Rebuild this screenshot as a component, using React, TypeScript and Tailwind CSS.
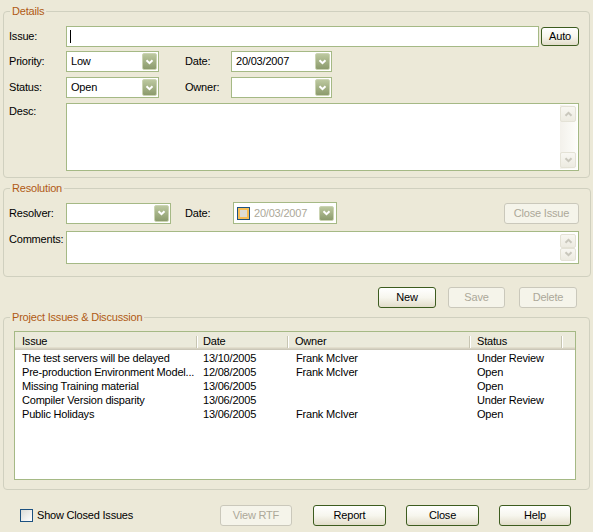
import type { ReactNode } from "react";

const ISSUES = [
  { issue: "The test servers will be delayed", date: "13/10/2005", owner: "Frank McIver", status: "Under Review" },
  { issue: "Pre-production Environment Model...", date: "12/08/2005", owner: "Frank McIver", status: "Open" },
  { issue: "Missing Training material", date: "13/06/2005", owner: "", status: "Open" },
  { issue: "Compiler Version disparity", date: "13/06/2005", owner: "", status: "Under Review" },
  { issue: "Public Holidays", date: "13/06/2005", owner: "Frank McIver", status: "Open" },
];

function DropArrow({ className = "h-full" }: { className?: string }) {
  return (
    <div
      className={`flex w-[15px] items-center justify-center rounded-[2px] border border-[#CBD4B3] bg-gradient-to-b from-[#BCC89F] to-[#8C9B6D] ${className}`}
    >
      <svg width="9" height="6" viewBox="0 0 9 6">
        <path d="M1.5 1.2 L4.5 4.2 L7.5 1.2" stroke="#fff" strokeWidth="2" fill="none" />
      </svg>
    </div>
  );
}

function Select({ width, value }: { width: string; value?: string }) {
  return (
    <div className={`flex h-[21px] border border-[#A5B985] bg-white p-px ${width}`}>
      <span className="flex-1 pl-[3px] leading-[17px]">{value}</span>
      <DropArrow />
    </div>
  );
}

function ScrollArrow({ up, className }: { up?: boolean; className: string }) {
  return (
    <div
      className={`flex items-center justify-center rounded-[2px] border border-[#E4E2D6] bg-gradient-to-b from-[#F8F7F2] to-[#EDEBE1] ${className}`}
    >
      <svg width="9" height="6" viewBox="0 0 9 6">
        <path
          d={up ? "M1.5 4.8 L4.5 1.8 L7.5 4.8" : "M1.5 1.2 L4.5 4.2 L7.5 1.2"}
          stroke="#C9C7BC"
          strokeWidth="2"
          fill="none"
        />
      </svg>
    </div>
  );
}

function Btn({
  children,
  className,
  disabled,
}: {
  children: ReactNode;
  className: string;
  disabled?: boolean;
}) {
  if (disabled) {
    return (
      <div
        className={`flex h-[21px] items-center justify-center rounded-[3px] border border-[#CAC8BB] bg-[#F5F4EA] text-[#ACA899] ${className}`}
      >
        {children}
      </div>
    );
  }
  return (
    <div
      className={`flex h-[21px] items-center justify-center rounded-[3px] border border-[#3D5C1F] bg-gradient-to-b from-white via-[#F7F6EE] to-[#E2DDCA] ${className}`}
    >
      {children}
    </div>
  );
}

function Group({ title, children, className }: { title: string; children: ReactNode; className: string }) {
  return (
    <fieldset className={`mx-[3px] w-[587px] rounded-[4px] border border-[#D0D0BF] ${className}`}>
      <legend className="ml-[6px] px-[2px] text-[#B05A14]">{title}</legend>
      {children}
    </fieldset>
  );
}

function HeaderCell({ label, className }: { label: string; className: string }) {
  return (
    <div className={`flex items-start justify-between ${className}`}>
      <span>{label}</span>
      <div className="mt-px h-[12px] w-[2px] border-l border-r border-l-[#C7C5B2] border-r-white" />
    </div>
  );
}

export default function App() {
  return (
    <div className="h-[532px] w-[593px] overflow-hidden bg-[#ECE9D8] pt-[5px] font-['Liberation_Sans',Arial,sans-serif] text-[11px] leading-[13px] tracking-[-0.2px] whitespace-nowrap text-black">
      <Group title="Details" className="">
        <div className="pb-[6px] pl-[5px] pt-[8px]">
          <div className="flex h-[21px] items-center">
            <span className="w-[57px]">Issue:</span>
            <div className="flex h-[21px] w-[473px] items-center border border-[#A5B985] bg-white pl-[3px]">
              <div className="h-[13px] w-px bg-black" />
            </div>
            <Btn className="ml-[2px] !h-[19px] w-[38px]">Auto</Btn>
          </div>

          <div className="mt-[4px] flex h-[21px] items-center">
            <span className="w-[57px]">Priority:</span>
            <Select width="w-[93px]" value="Low" />
            <span className="ml-[26px] w-[46px]">Date:</span>
            <Select width="w-[101px]" value="20/03/2007" />
          </div>

          <div className="mt-[5px] flex h-[21px] items-center">
            <span className="w-[57px]">Status:</span>
            <Select width="w-[93px]" value="Open" />
            <span className="ml-[26px] w-[46px]">Owner:</span>
            <Select width="w-[101px]" />
          </div>

          <div className="mt-[5px] flex">
            <span className="mt-[2px] w-[57px]">Desc:</span>
            <div className="flex h-[68px] w-[513px] justify-end border border-[#A5B985] bg-white p-px">
              <div className="flex w-[17px] flex-col bg-gradient-to-r from-[#F3F1EB] to-[#FDFDFA] py-[1px] pr-px">
                <ScrollArrow up className="h-[16px]" />
                <div className="flex-1" />
                <ScrollArrow className="h-[16px]" />
              </div>
            </div>
          </div>
        </div>
      </Group>

      <Group title="Resolution" className="mt-[4px]">
        <div className="pb-[12px] pl-[5px] pr-[11px] pt-[7px]">
          <div className="flex h-[22px] items-center">
            <span className="w-[57px]">Resolver:</span>
            <Select width="w-[105px]" />
            <span className="ml-[14px] w-[48px]">Date:</span>
            <div className="flex h-[22px] w-[104px] items-center border border-[#A5B985] bg-white pl-[3px] pr-[2px]">
              <div className="h-[13px] w-[13px] border border-[#1C5180] bg-white">
                <div className="h-full w-full border-2 border-[#F7BE56] bg-[#DEDDD6]" />
              </div>
              <span className="ml-[4px] flex-1 text-[#ACA899]">20/03/2007</span>
              <DropArrow className="h-[15px]" />
            </div>
            <Btn disabled className="ml-auto w-[75px]">
              Close Issue
            </Btn>
          </div>

          <div className="mt-[7px] flex">
            <span className="mt-[2px] w-[57px]">Comments:</span>
            <div className="flex h-[33px] w-[513px] justify-end border border-[#A5B985] bg-white p-px">
              <div className="flex w-[17px] flex-col justify-between py-px pr-px">
                <ScrollArrow up className="h-[14px]" />
                <ScrollArrow className="h-[14px]" />
              </div>
            </div>
          </div>
        </div>
      </Group>

      <div className="mt-[10px] flex justify-end pr-[16px]">
        <Btn className="w-[58px]">New</Btn>
        <Btn disabled className="ml-[12px] w-[57px]">
          Save
        </Btn>
        <Btn disabled className="ml-[14px] w-[58px]">
          Delete
        </Btn>
      </div>

      <Group title="Project Issues & Discussion" className="mt-[3px]">
        <div className="pb-[9px] pl-[10px] pt-[7px]">
          <div className="h-[149px] w-[562px] border border-[#A5B985] bg-white">
            <div className="grid h-[18px] grid-cols-[183px_91px_182px_92px_1fr] bg-[#EBEADB] pt-[3px] shadow-[inset_0_-1px_0_#CBC7B8,inset_0_-2px_0_#D6D2C2,inset_0_-3px_0_#E2DECD]">
              <HeaderCell label="Issue" className="pl-[7px]" />
              <HeaderCell label="Date" className="pl-[5px]" />
              <HeaderCell label="Owner" className="pl-[6px]" />
              <HeaderCell label="Status" className="pl-[6px]" />
              <div />
            </div>
            <div className="pt-px">
              {ISSUES.map((row) => (
                <div key={row.issue} className="grid grid-cols-[183px_91px_182px_92px_1fr] leading-[14px]">
                  <span className="pl-[7px]">{row.issue}</span>
                  <span className="pl-[5px]">{row.date}</span>
                  <span className="pl-[7px]">{row.owner}</span>
                  <span className="pl-[6px]">{row.status}</span>
                  <span />
                </div>
              ))}
            </div>
          </div>
        </div>
      </Group>

      <div className="mt-[15px] flex h-[21px] items-center">
        <div className="flex w-[220px] items-center pl-[20px]">
          <div className="h-[13px] w-[13px] border border-[#1C5180] bg-gradient-to-br from-[#DCDCD7] to-white" />
          <span className="ml-[4px]">Show Closed Issues</span>
        </div>
        <Btn disabled className="w-[72px]">
          View RTF
        </Btn>
        <Btn className="ml-[21px] w-[73px]">Report</Btn>
        <Btn className="ml-[20px] w-[73px]">Close</Btn>
        <Btn className="ml-[20px] w-[72px]">Help</Btn>
      </div>
    </div>
  );
}
